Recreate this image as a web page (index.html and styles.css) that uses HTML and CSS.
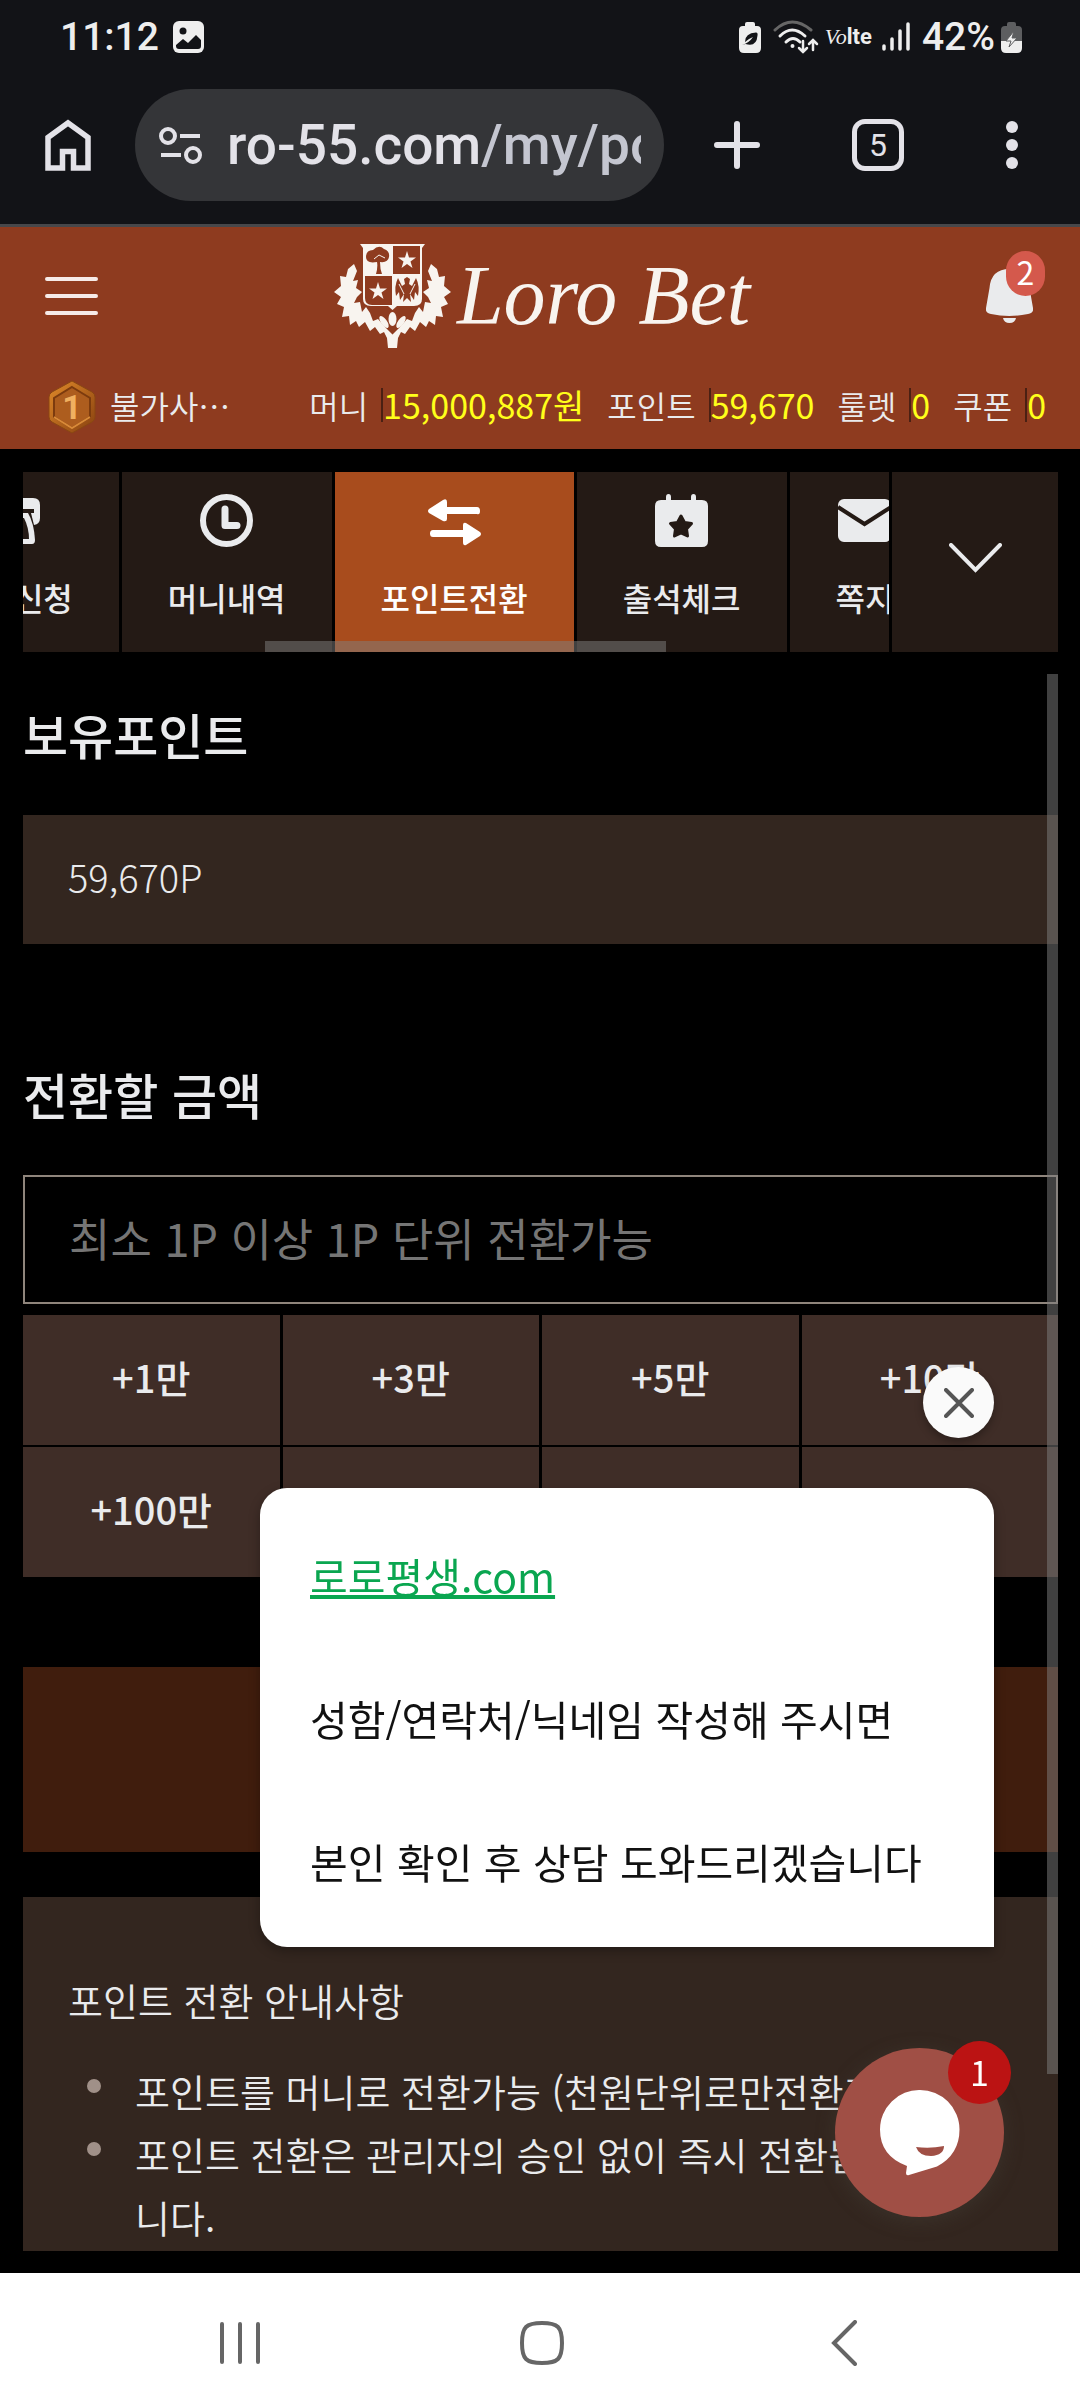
FILE: index.html
```html
<!DOCTYPE html>
<html lang="ko">
<head>
  <meta charset="UTF-8">
  <meta name="viewport" content="width=device-width, initial-scale=1">
  <title>Loro Bet</title>
  <link rel="stylesheet" href="styles.css">
</head>
<body>

  <!-- Phone status bar -->
  <div class="status-bar">
    <span class="clock">11:12</span>
    <svg width="31" height="32" viewBox="0 0 31 32">
      <rect width="31" height="32" rx="6" fill="#eee"/>
      <circle cx="10" cy="10" r="3.500" fill="#121317"/>
      <path d="M3 24l7-6 5 4 8-8 5 5v6q0 3-3 3H6q-3 0-3-3z" fill="#121317"/>
    </svg>
    <div class="status-icons">
      <svg width="22" height="32" viewBox="0 0 22 32">
        <path d="M6 3q0-2 2-2h6q2 0 2 2v2h2q4 0 4 4v18q0 5-5 5H5q-5 0-5-5V9q0-4 4-4h2z" fill="#eee"/>
        <path d="M3 24q7-2 11-8-5 2-8 5 0-9 11-9.500 2 0 1.500 3-1 12-12 8.500z" fill="#121317"/>
      </svg>
      <svg class="wifi" width="46" height="34" viewBox="0 0 46 34" fill="none" stroke="#eee" stroke-width="3" stroke-linecap="round">
        <path d="M2 10q17-16 36 0" stroke="#666"/>
        <path d="M7 16q12-12 25 0M13 22q7-7 14 0"/>
        <circle cx="19.500" cy="26" r="1" fill="#eee" stroke-width="2"/>
        <path d="M30 21v11m-4-4l4 4 4-4M40 30V20m-4 4l4-4 4 4" stroke-width="2.500"/>
      </svg>
      <span class="volte"><i>Vo</i><b>lte</b></span>
      <svg class="signal" width="28" height="30" viewBox="0 0 28 30" stroke="#eee" stroke-width="3.500" stroke-linecap="round">
        <path d="M2 24v3M10 17v10M18 9v18M26 2v25"/>
      </svg>
      <span class="percent">42%</span>
      <svg width="21" height="32" viewBox="0 0 21 32">
        <path d="M6 3q0-2 2-2h5q2 0 2 2v2h2q4 0 4 4v12H0V9q0-4 4-4h2z" fill="#5d5e60"/>
        <path d="M0 20h21v7q0 5-5 5H5q-5 0-5-5z" fill="#eee"/>
        <path d="M13 10L5 20h5l-2 6 8-9h-5z" fill="#eee" stroke="#5d5e60"/>
      </svg>
    </div>
  </div>

  <!-- Browser bar -->
  <div class="browser-bar">
    <button class="bare" aria-label="Home">
      <svg width="46" height="52" viewBox="0 0 46 52" fill="none" stroke="#e3e2e8" stroke-width="5.500">
        <path d="M3 49V18.500L23 4l20 14.500V49H28.500V32.500h-11V49z"/>
      </svg>
    </button>
    <div class="address">
      <svg width="43" height="38" viewBox="0 0 43 38" fill="none" stroke="#e3e2e8" stroke-width="4">
        <circle cx="9" cy="10" r="7"/>
        <circle cx="34" cy="29" r="7"/>
        <path d="M21 10h20M2 29h20"/>
      </svg>
      <div class="url">ro-55.com<span>/my/point</span></div>
    </div>
    <button class="bare plus" aria-label="New tab">
      <svg width="46" height="48" viewBox="0 0 46 48" stroke="#e3e2e8" stroke-width="6" stroke-linecap="round">
        <path d="M23 3v42M3 24h40"/>
      </svg>
    </button>
    <button class="tab-count">5</button>
    <button class="bare more" aria-label="Menu">
      <svg width="12" height="48" viewBox="0 0 12 48" fill="#e3e2e8">
        <circle cx="6" cy="6" r="6"/><circle cx="6" cy="24" r="6"/><circle cx="6" cy="42" r="6"/>
      </svg>
    </button>
  </div>

  <!-- Site header -->
  <header class="site-header">
    <div class="header-top">
      <button class="bare" aria-label="메뉴">
        <svg width="53" height="38" viewBox="0 0 53 38" stroke="#f6ebe8" stroke-width="4" stroke-linecap="round">
          <path d="M2 2h49M2 19h49M2 36h49"/>
        </svg>
      </button>
      <a class="logo" href="#">
        <svg width="117" height="104" viewBox="0 0 117 104" fill="#f8f4ef">
          <defs>
            <path id="branch" d="M20 20l-6 5-2 8-6-1 1 10-7 6 7 5-4 7 7 3-2 10 7-1 1 9 6-4 3 6 6-5 5 9 5-4 5 7 4-2 3 6 1 10h5V91l-9-9-6-7-5 2-3-8-4-6-4 5-2-10-6 1 3-6 5-5-6-4 2-8-5 1 4-10z"/>
            <path id="star" d="M0-9l2 6.500h7L3.500 1.500 5.500 8 0 4l-5.500 4 2-6.500L-9-2.500h7z"/>
          </defs>
          <use href="#branch"/>
          <use href="#branch" transform="matrix(-1 0 0 1 117 0)"/>
          <ellipse cx="58.500" cy="75" rx="4" ry="7"/>
          <ellipse cx="50" cy="78" rx="3" ry="7" transform="rotate(-35 50 78)"/>
          <ellipse cx="67" cy="78" rx="3" ry="7" transform="rotate(35 67 78)"/>
          <path d="M26 0h65l-3 4v51q0 7-8 7H63l-4.500 4L54 62H37q-8 0-8-7V4z"/>
          <path d="M59 2h27v28H59zM31 32h27v29H38q-7 0-7-7z" fill="#8e3b1f"/>
          <use href="#star" x="73" y="16"/>
          <use href="#star" x="44" y="47"/>
          <g fill="#8e3b1f">
            <path d="M42 30q2-7 1-12-11 2-11-5 0-7 7-7 6-6 11-1 6 2 5 8-1 6-9 5 0 7 2 12z"/>
            <path d="M64 34q-4 8-2 18l3-4 1 8 4-6-1 8 4-4 4 4-1-8 4 6 1-8 3 4q2-10-2-18l-4 8-3-2 1-5-3-2-3 2 1 5-3 2z"/>
          </g>
          <path d="M40 15l5-4 6 3M65 40l5 10M81 40l-5 10" stroke="#f8f4ef" fill="none"/>
        </svg>
        <span>Loro Bet</span>
      </a>
      <button class="bare bell" aria-label="알림">
        <svg width="47" height="54" viewBox="0 0 47 54" fill="#eaebed">
          <path d="M23.500 0Q5 0 3.500 19L0 39q-1 5 5 6 18 4 37 0 6-1 5-6l-3.500-20Q42 0 23.500 0z"/>
          <path d="M17 49h13q-1 5-6.500 5T17 49z"/>
        </svg>
        <span class="bell-badge">2</span>
      </button>
    </div>
    <div class="header-info">
      <svg width="48" height="54" viewBox="0 0 48 54">
        <defs>
          <linearGradient id="bronze" x1="0" y1="0" x2="1" y2="1">
            <stop offset="0" stop-color="#e08a2a"/>
            <stop offset="1" stop-color="#87400f"/>
          </linearGradient>
        </defs>
        <path d="M24 1l20 11q3 2 3 5v20q0 3-3 5L24 53 4 42q-3-2-3-5V17q0-3 3-5z" fill="url(#bronze)" stroke="#8a4712"/>
        <path d="M24 7l18 11v19L24 48 6 37V18z" fill="#ad5d1e" stroke="#7c3b0e" stroke-width="2"/>
        <path d="M6 37l18 11 18-11" fill="none" stroke="#d98a38" stroke-width="2"/>
        <text class="medal-rank" x="24" y="39" text-anchor="middle">1</text>
      </svg>
      <span class="nickname">불가사…</span>
      <dl class="wallet">
        <div><dt>머니</dt><dd>15,000,887원</dd></div>
        <div><dt>포인트</dt><dd>59,670</dd></div>
        <div><dt>룰렛</dt><dd>0</dd></div>
        <div><dt>쿠폰</dt><dd>0</dd></div>
      </dl>
    </div>
  </header>

  <main class="content">
    <nav class="tabs">
      <div class="tab-list">
        <a class="tab first" href="#">
          <svg width="53" height="53" viewBox="0 0 53 53" fill="#eaebed">
            <path d="M7 4h39q7 0 7 7v13q0 6-6 7l-3-12h3v-4H5v4h3L5 31q-5-1-5-7V11q0-7 7-7z"/>
            <path d="M12 19h29q6 10 7 27 0 4-3 4H15z"/>
            <path d="M18 24h19q5 10 5 21H18z" fill="#241a15"/>
          </svg>
          <span>환전신청</span>
        </a>
        <a class="tab" href="#">
          <svg width="53" height="53" viewBox="0 0 53 53" fill="none" stroke="#eaebed">
            <circle cx="26.500" cy="26.500" r="23.500" stroke-width="6"/>
            <path d="M25 15v16.500h12" stroke-width="7" stroke-linecap="round" stroke-linejoin="round"/>
          </svg>
          <span>머니내역</span>
        </a>
        <a class="tab active" href="#">
          <svg width="53" height="53" viewBox="0 0 53 53" fill="#fff">
            <path d="M1 15L15 6q4-2 4 2v5h30q3 0 3 4t-3 3H19v5q0 3-4 2L1 19q-2-2 0-4z"/>
            <path d="M52 38L38 29q-3-1-3 2v5H5q-3 0-3 3.500T5 43h30v5q0 4 3 3l14-9q2-2 0-4z"/>
          </svg>
          <span>포인트전환</span>
        </a>
        <a class="tab" href="#">
          <svg width="53" height="53" viewBox="0 0 53 53" fill="#eaebed">
            <path d="M11 6V3q0-3 2.500-3T16 3v3h20V3q0-3 2.500-3T41 3v3h6q6 0 6 6v35q0 6-6 6H6q-6 0-6-6V12q0-6 6-6z"/>
            <path d="M26 22l3.500 6.500 7 1-5 5.500 1 7-6.500-3-6.500 3 1-7-5-5.500 7-1z" fill="#241a15" stroke="#241a15" stroke-width="3" stroke-linejoin="round"/>
          </svg>
          <span>출석체크</span>
        </a>
        <a class="tab" href="#">
          <svg width="53" height="53" viewBox="0 0 53 53">
            <rect y="5" width="53" height="43" rx="6" fill="#eaebed"/>
            <path d="M0 13l26.500 17L53 13" fill="none" stroke="#241a15" stroke-width="4"/>
          </svg>
          <span>쪽지</span>
        </a>
        <div class="tab-scroll"></div>
      </div>
      <button class="tab-more" aria-label="더보기">
        <svg width="53" height="30" viewBox="0 0 53 30" fill="none" stroke="#eaebed" stroke-width="4" stroke-linecap="round">
          <path d="M2 2l24.500 25L51 2"/>
        </svg>
      </button>
    </nav>

    <form class="panel">
      <h2>보유포인트</h2>
      <div class="balance">59,670P</div>

      <label for="amount">전환할 금액</label>
      <input id="amount" class="amount" type="text" placeholder="최소 1P 이상 1P 단위 전환가능">

      <div class="quick">
        <button type="button">+1만</button>
        <button type="button">+3만</button>
        <button type="button">+5만</button>
        <button type="button">+10만</button>
        <button type="button">+100만</button>
        <button type="button" aria-label="+500만"></button>
        <button type="button" aria-label="전액"></button>
        <button type="button" aria-label="정정"></button>
      </div>

      <button class="submit" type="button" aria-label="전환하기"></button>

      <section class="notice">
        <h3>포인트 전환 안내사항</h3>
        <ul>
          <li>포인트를 머니로 전환가능 (천원단위로만전환가능)</li>
          <li>포인트 전환은 관리자의 승인 없이 즉시 전환됩<br>니다.</li>
        </ul>
      </section>
      <div class="panel-scroll"></div>
    </form>
  </main>

  <!-- Chat widget -->
  <aside class="chat">
    <button class="chat-close" aria-label="닫기">
      <svg width="30" height="30" viewBox="0 0 30 30" stroke="#555" stroke-width="4" stroke-linecap="round">
        <path d="M2 2l26 26M28 2L2 28"/>
      </svg>
    </button>
    <div class="chat-message">
      <p><a href="#">로로평생.com</a></p>
      <p>성함/연락처/닉네임 작성해 주시면</p>
      <p>본인 확인 후 상담 도와드리겠습니다</p>
    </div>
    <button class="chat-open" aria-label="상담">
      <svg width="80" height="86" viewBox="0 0 80 86">
        <path d="M40 0a39.500 39.500 0 0 1 39.500 39.500q0 25-22.500 37L29 85q-3 1-3-2l1-7Q0 66 0 39.500A39.500 39.500 0 0 1 40 0z" fill="#fff"/>
        <path d="M36 57q14 2 28-1 0 9-13 10-12 0-15-9z" fill="#a04f45"/>
      </svg>
      <span class="chat-badge">1</span>
    </button>
  </aside>

  <!-- Phone navigation -->
  <footer class="phone-nav">
    <button class="bare" aria-label="Recents">
      <svg width="40" height="44" viewBox="0 0 40 44" stroke="#666" stroke-width="4" stroke-linecap="round">
        <path d="M2 3v38M20 3v38M38 3v38"/>
      </svg>
    </button>
    <button class="bare" aria-label="Home">
      <svg width="46" height="46" viewBox="0 0 46 46" fill="none" stroke="#666" stroke-width="4">
        <path d="M23 3c16 0 20 4 20 20s-4 20-20 20S3 39 3 23 7 3 23 3z"/>
      </svg>
    </button>
    <button class="bare" aria-label="Back">
      <svg width="26" height="46" viewBox="0 0 26 46" fill="none" stroke="#666" stroke-width="4" stroke-linecap="round">
        <path d="M24 2L3 23l21 21"/>
      </svg>
    </button>
  </footer>

</body>
</html>
```

FILE: styles.css
```css
* {
  box-sizing: border-box;
  margin: 0;
  padding: 0;
}

body {
  display: flex;
  flex-direction: column;
  min-height: 100vh;
  background-color: #000;
  color: #eaebed;
  font-family: "Noto Sans CJK KR", sans-serif;
  font-size: 32px;
}

button {
  border: none;
  color: inherit;
  font-family: inherit;
}

svg {
  display: block;
  flex-shrink: 0;
}

a {
  color: inherit;
  text-decoration: none;
}

.bare {
  background: none;
}

/* Status bar */
.status-bar {
  display: flex;
  align-items: center;
  gap: 14px;
  height: 73px;
  padding: 0 58px 0 60px;
  background-color: #121317;
  font-family: Roboto, sans-serif;
  font-size: 39px;
  font-weight: 500;
  color: #eee;
}

.status-icons {
  display: flex;
  align-items: center;
  gap: 6px;
  margin-left: auto;
}

.wifi {
  margin-left: 6px;
}

.volte {
  font-size: 22px;
}

.volte i {
  font-family: "Liberation Serif", serif;
}

.signal {
  margin: 0 6px 0 4px;
}

/* Browser bar */
.browser-bar {
  display: flex;
  align-items: center;
  height: 154px;
  padding: 0 62px 8px 45px;
  background-color: #121317;
  border-bottom: 3px solid #47474a;
  font-family: Roboto, sans-serif;
}

.address {
  flex: 1;
  min-width: 0;
  display: flex;
  align-items: center;
  gap: 25px;
  height: 112px;
  margin: 0 50px 0 44px;
  padding: 0 23px 0 24px;
  border-radius: 56px;
  background-color: #343538;
}

.url {
  flex: 1;
  overflow: hidden;
  white-space: nowrap;
  font-size: 55px;
  font-weight: 500;
  line-height: 80px;
  color: #e3e2e8;
}

.url span {
  color: #c4c6d0;
}

.tab-count {
  width: 52px;
  height: 52px;
  margin: 0 102px 0 92px;
  border: 5px solid #e3e2e8;
  border-radius: 13px;
  background: none;
  color: #e3e2e8;
  font-size: 32px;
  line-height: 40px;
}

/* Site header */
.site-header {
  background-color: #8e3b1f;
}

.header-top {
  display: flex;
  align-items: center;
  justify-content: space-between;
  height: 138px;
  padding: 0 47px 0 45px;
}

.logo {
  display: flex;
  align-items: center;
  gap: 6px;
  color: #f8f4ef;
  font-family: "Liberation Serif", serif;
  font-size: 84px;
  font-style: italic;
  line-height: 100px;
}

.bell {
  position: relative;
}

.bell-badge {
  position: absolute;
  top: -18px;
  right: -12px;
  width: 39px;
  height: 45px;
  border-radius: 20px;
  background-color: #d4594c;
  color: #fff;
  font-size: 32px;
  line-height: 40px;
}

.header-info {
  display: flex;
  align-items: center;
  height: 84px;
  padding: 0 34px 0 48px;
  line-height: 44px;
  white-space: nowrap;
}

.medal-rank {
  fill: #f0b060;
  font-family: Roboto, sans-serif;
  font-size: 34px;
  font-weight: 700;
}

.nickname {
  margin-left: 14px;
  padding-bottom: 4px;
  font-weight: 350;
}

.wallet {
  display: flex;
  gap: 23px;
  margin-left: auto;
  padding-bottom: 4px;
}

.wallet div {
  display: flex;
  align-items: center;
  gap: 13px;
}

.wallet dt {
  font-weight: 350;
}

.wallet dd {
  border-left: 2px solid #4a2013;
  color: #ffff1a;
  font-size: 34px;
  line-height: 34px;
}

/* Tabs */
.content {
  flex: 1;
  display: flex;
  flex-direction: column;
  gap: 22px;
  padding: 23px 22px 22px 23px;
}

.tabs {
  display: flex;
  gap: 3px;
  height: 180px;
}

.tab-list {
  position: relative;
  flex: 1;
  display: flex;
  gap: 3px;
  overflow: hidden;
}

.tab {
  display: flex;
  flex-direction: column;
  align-items: center;
  gap: 22px;
  flex-shrink: 0;
  padding: 22px 46px 0;
  background-color: #241a15;
  font-weight: 500;
  line-height: 56px;
}

.tab.first {
  margin-left: -114px;
}

.tab.active {
  background-color: #a84c1d;
  color: #fff;
}

.tab-scroll {
  position: absolute;
  left: 28%;
  bottom: 0;
  width: 401px;
  height: 11px;
  background-color: rgba(128, 128, 128, 0.5);
}

.tab-more {
  display: flex;
  align-items: center;
  justify-content: center;
  width: 166px;
  padding-bottom: 8px;
  background-color: #241a15;
}

/* Point panel */
.panel {
  position: relative;
  flex: 1;
  display: flex;
  flex-direction: column;
  padding-top: 24px;
}

.panel h2,
.panel label {
  margin-bottom: 45px;
  font-size: 49px;
  font-weight: 500;
  line-height: 72px;
}

.panel label {
  margin-top: 114px;
}

.balance {
  height: 129px;
  padding: 0 45px;
  background-color: #33261f;
  font-size: 38px;
  font-weight: 300;
  line-height: 124px;
}

.amount {
  height: 129px;
  padding: 0 44px 4px;
  border: 2px solid #8f857c;
  background-color: #000;
  color: #eaebed;
  font-family: inherit;
  font-size: 45px;
}

.amount::placeholder {
  color: #757575;
}

.quick {
  display: grid;
  grid-template-columns: repeat(4, 1fr);
  grid-auto-rows: 130px;
  gap: 2px 3px;
  margin-top: 11px;
}

.quick button {
  padding-bottom: 8px;
  background-color: #3f2d27;
  font-size: 38px;
  font-weight: 500;
}

.submit {
  height: 185px;
  margin: 90px 0 45px;
  background-color: #401d0d;
}

.notice {
  flex: 1;
  padding: 71px 45px 0;
  background-color: #33261f;
  font-size: 38px;
  font-weight: 350;
  line-height: 63px;
}

.notice h3 {
  margin-bottom: 28px;
  font-size: 38px;
  font-weight: 350;
}

.notice ul {
  list-style: none;
}

.notice li {
  position: relative;
  padding-left: 67px;
}

.notice li::before {
  content: "";
  position: absolute;
  left: 19px;
  top: 20px;
  width: 14px;
  height: 14px;
  border-radius: 50%;
  background-color: #a09088;
}

.panel-scroll {
  position: absolute;
  top: 0;
  right: 0;
  width: 11px;
  height: 1400px;
  background-color: rgba(128, 128, 128, 0.5);
}

/* Chat widget */
.chat {
  position: fixed;
  right: 76px;
  bottom: 191px;
  display: flex;
  flex-direction: column;
  align-items: flex-end;
}

.chat-close {
  display: flex;
  align-items: center;
  justify-content: center;
  width: 71px;
  height: 71px;
  margin: 0 10px 50px 0;
  border-radius: 50%;
  background-color: #fafafa;
  box-shadow: 0 4px 8px rgba(0, 0, 0, 0.3);
}

.chat-message {
  display: flex;
  flex-direction: column;
  gap: 79px;
  width: 734px;
  height: 459px;
  margin: 0 10px 101px 0;
  padding: 55px 50px 0;
  border-radius: 27px 27px 0 27px;
  background-color: #fff;
  box-shadow: 0 4px 12px rgba(0, 0, 0, 0.3);
  color: #111;
  font-size: 41px;
  line-height: 64px;
}

.chat-message a {
  color: #0aa650;
  text-decoration: underline;
  text-decoration-skip-ink: none;
  text-decoration-thickness: 4px;
}

.chat-open {
  position: relative;
  display: flex;
  align-items: center;
  justify-content: center;
  width: 169px;
  height: 169px;
  border-radius: 50%;
  background-color: #a04f45;
  box-shadow: 0 4px 20px rgba(80, 80, 70, 0.3);
}

.chat-badge {
  position: absolute;
  top: -7px;
  right: -7px;
  width: 63px;
  height: 63px;
  border-radius: 50%;
  background-color: #bb1313;
  color: #fff;
  font-size: 34px;
  line-height: 62px;
}

/* Phone navigation */
.phone-nav {
  display: flex;
  align-items: center;
  height: 135px;
  padding: 4px 85px 0 89px;
  background-color: #fff;
}

.phone-nav button {
  flex: 1;
}

.phone-nav svg {
  margin: 0 auto;
}
```
